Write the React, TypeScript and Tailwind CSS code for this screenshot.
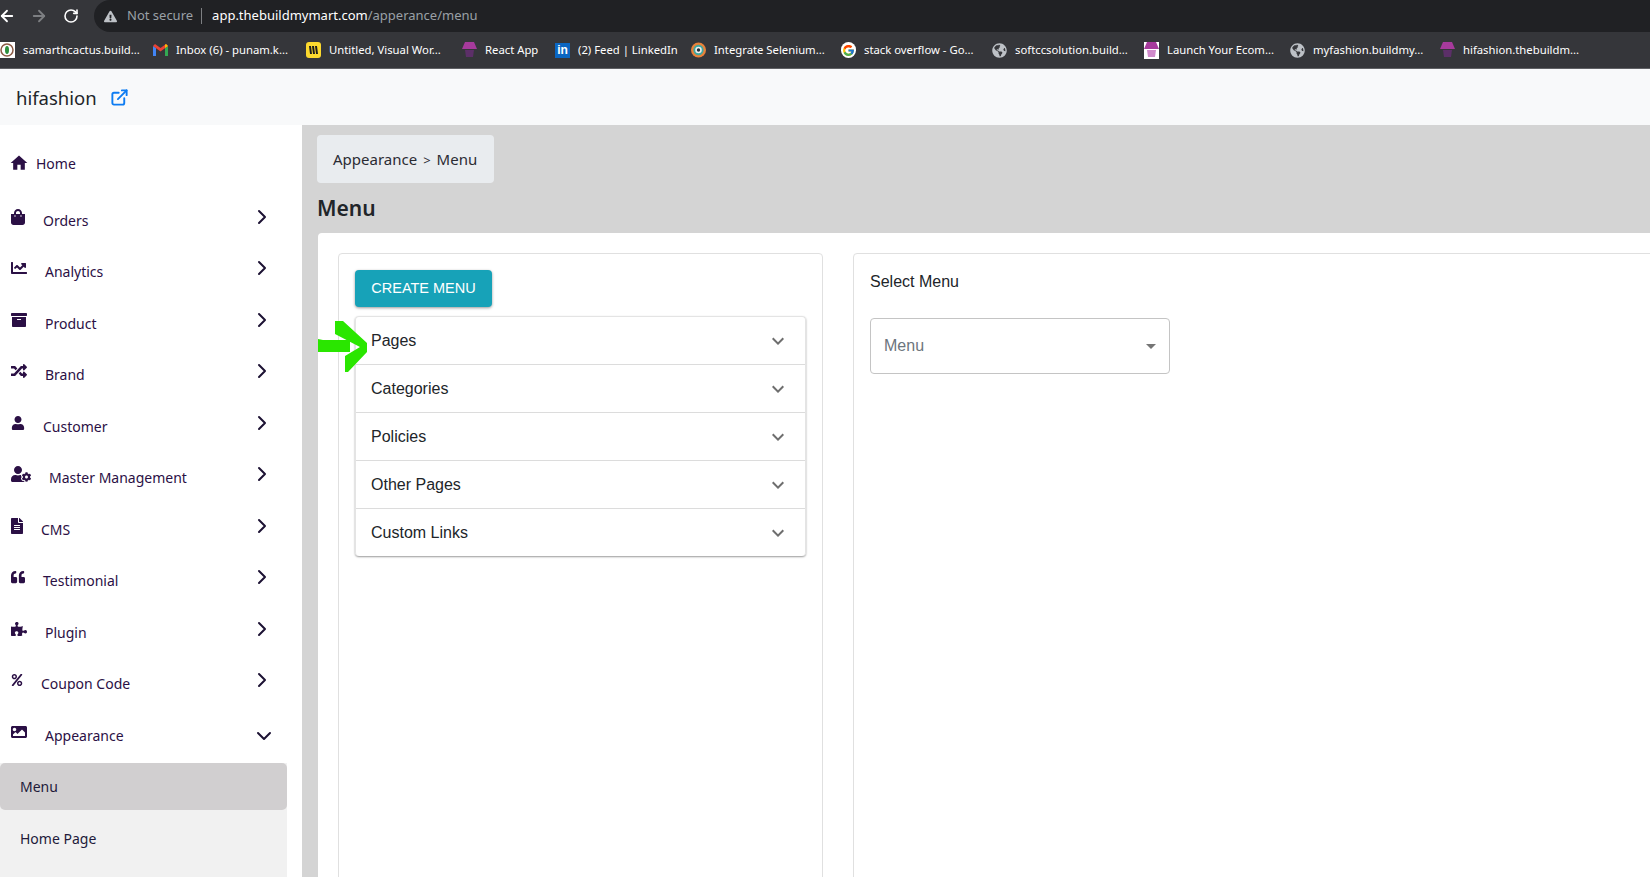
import React from 'react';
import { ArrowLeft, ArrowRight, ChevronDown, ChevronRight, ExternalLink, RotateCw } from 'lucide-react';
import {
  FaArchive,
  FaChartLine,
  FaExclamationTriangle,
  FaFileAlt,
  FaGlobeAmericas,
  FaImage,
  FaPercent,
  FaPuzzlePiece,
  FaQuoteLeft,
  FaRandom,
  FaShoppingBag,
  FaUser,
  FaUserCog,
} from 'react-icons/fa';
import { FcGoogle } from 'react-icons/fc';
import { MdExpandMore, MdHome } from 'react-icons/md';

const ShopIcon = ({ boxed }: { boxed?: boolean }) => (
  <svg width="15" height="17" viewBox="0 0 15 17" className={boxed ? 'bg-white' : ''}>
    <path d="M3 0h9l3 7H0z" fill="#a63a9c" />
    <path d="M3 8h9l-1 7H4z" fill={boxed ? '#d08acb' : '#5c2f68'} />
  </svg>
);

const GmailIcon = () => (
  <svg width="15" height="12" viewBox="0 0 15 12">
    <path d="M0 2v10h3V4z" fill="#4285f4" />
    <path d="M15 2v10h-3V4z" fill="#34a853" />
    <path d="M0 2l7.5 5.5L15 2 13 0 7.5 4 2 0z" fill="#ea4335" />
    <path d="M12 4l3-2-2-2-1 .8z" fill="#fbbc04" />
  </svg>
);

const CactusIcon = () => (
  <svg width="15" height="16" viewBox="0 0 15 16">
    <rect width="15" height="16" fill="#fff" />
    <circle cx="7" cy="8" r="6" fill="none" stroke="#8a5a44" strokeWidth="1.5" />
    <ellipse cx="7" cy="8" rx="2" ry="4" fill="#2f8f3e" />
  </svg>
);

const MiroIcon = () => (
  <svg width="15" height="16" viewBox="0 0 15 16">
    <rect width="15" height="16" rx="3" fill="#fcd92e" />
    <path d="M4 4l1 8M7 4l1 8M10 4l1 8" stroke="#1c1c1c" strokeWidth="2" />
  </svg>
);

const TargetIcon = () => (
  <svg width="16" height="16" viewBox="0 0 16 16">
    <circle cx="8" cy="8" r="8" fill="#e8823a" />
    <circle cx="8" cy="8" r="5.5" fill="#3fa7a0" />
    <circle cx="8" cy="8" r="3.5" fill="#f0f0f0" />
    <circle cx="8" cy="8" r="1.8" fill="#23303a" />
  </svg>
);

const bookmarks = [
  { label: 'samarthcactus.build...', width: 'w-[153px]', icon: <CactusIcon /> },
  { label: 'Inbox (6) - punam.k...', width: 'w-[153px]', icon: <GmailIcon /> },
  { label: 'Untitled, Visual Wor...', width: 'w-[156px]', icon: <MiroIcon /> },
  { label: 'React App', width: 'w-[93px]', icon: <ShopIcon /> },
  {
    label: '(2) Feed | LinkedIn',
    width: 'w-[136px]',
    icon: (
      <span className="flex h-[15px] w-[15px] items-center justify-center bg-[#0a66c2] font-['Liberation_Sans',sans-serif] text-[12px] font-bold leading-none text-white">
        in
      </span>
    ),
  },
  { label: 'Integrate Selenium...', width: 'w-[150px]', icon: <TargetIcon /> },
  {
    label: 'stack overflow - Go...',
    width: 'w-[151px]',
    icon: (
      <span className="flex h-4 w-4 items-center justify-center rounded-full bg-white">
        <FcGoogle size={13} />
      </span>
    ),
  },
  { label: 'softccsolution.build...', width: 'w-[152px]', icon: <FaGlobeAmericas size={15} className="text-[#bdc1c6]" /> },
  { label: 'Launch Your Ecom...', width: 'w-[146px]', icon: <ShopIcon boxed /> },
  { label: 'myfashion.buildmy...', width: 'w-[150px]', icon: <FaGlobeAmericas size={15} className="text-[#bdc1c6]" /> },
  { label: 'hifashion.thebuildm...', width: 'w-[150px]', icon: <ShopIcon /> },
];

const navItems = [
  { label: 'Orders', icon: <FaShoppingBag size={16} className="w-[14px]" /> },
  { label: 'Analytics', icon: <FaChartLine size={16} /> },
  { label: 'Product', icon: <FaArchive size={16} /> },
  { label: 'Brand', icon: <FaRandom size={16} /> },
  { label: 'Customer', icon: <FaUser size={14} /> },
  { label: 'Master Management', icon: <FaUserCog size={20} /> },
  { label: 'CMS', icon: <FaFileAlt size={16} className="w-3" /> },
  { label: 'Testimonial', icon: <FaQuoteLeft size={14} /> },
  { label: 'Plugin', icon: <FaPuzzlePiece size={16} /> },
  { label: 'Coupon Code', icon: <FaPercent size={12} /> },
];

const accordionItems = ['Pages', 'Categories', 'Policies', 'Other Pages', 'Custom Links'];

const App: React.FC = () => {
  return (
    <div className="flex h-[877px] w-[1650px] flex-col overflow-hidden bg-white font-['Noto_Sans',sans-serif]">
      {/* Browser toolbar */}
      <div className="flex h-8 shrink-0 items-center bg-[#35363a]">
        <div className="flex w-[94px] shrink-0 items-center text-white">
          <ArrowLeft size={18} strokeWidth={2.4} className="-ml-[2px]" />
          <ArrowRight size={18} strokeWidth={2.4} className="ml-[14px] text-[#7d7f82]" />
          <RotateCw size={16} strokeWidth={2.4} className="ml-[15px]" />
        </div>
        <div className="flex h-8 flex-1 items-center rounded-l-[16px] bg-[#202124] pl-[10px] text-[13px]">
          <FaExclamationTriangle size={13} className="text-[#bdc1c6]" />
          <span className="ml-[10px] text-[#9aa0a6]">Not secure</span>
          <span className="ml-[8px] h-4 w-px bg-[#7d7f82]" />
          <span className="ml-[10px] text-white">app.thebuildmymart.com</span>
          <span className="text-[#9aa0a6]">/apperance/menu</span>
        </div>
      </div>

      {/* Bookmarks */}
      <div className="flex h-[37px] shrink-0 items-center border-b border-[#5f6064] bg-[#35363a]">
        {bookmarks.map((b) => (
          <div key={b.label} className={`flex shrink-0 items-center gap-2 ${b.width}`}>
            <span className="flex w-[15px] shrink-0 justify-center">{b.icon}</span>
            <span className="whitespace-nowrap text-[11.3px] text-white">{b.label}</span>
          </div>
        ))}
      </div>

      {/* App header */}
      <header className="flex h-[56px] shrink-0 items-center bg-[#f8f9fa] pl-4">
        <span className="pt-[2px] text-[18.5px] text-[#212529]">hifashion</span>
        <ExternalLink size={19} strokeWidth={2.4} className="ml-[13px] text-[#0d7cf2]" />
      </header>

      <div className="flex min-h-0 flex-1">
        {/* Sidebar */}
        <aside className="flex w-[302px] shrink-0 flex-col bg-white text-[14px] text-[#2b1045]">
          <div className="mb-[2px] mt-[12px] flex h-[52px] items-center gap-[7px] pl-[9px]">
            <MdHome size={20} />
            <span>Home</span>
          </div>
          {navItems.map((item) => (
            <div key={item.label} className="flex h-[51.5px] items-center pl-[11px] pr-[28px]">
              {item.icon}
              <span className="ml-[18px] flex-1 pt-[7px]">{item.label}</span>
              <ChevronRight size={24} strokeWidth={2} className="text-[#1c1233]" />
            </div>
          ))}
          <div className="flex h-[51.5px] items-center pl-[11px] pr-[28px]">
            <FaImage size={16} />
            <span className="ml-[18px] flex-1 pt-[7px]">Appearance</span>
            <ChevronDown size={24} strokeWidth={2} className="-mr-[2px] mt-2 text-[#1c1233]" />
          </div>
          <div className="mt-[5px] flex w-[287px] flex-1 flex-col bg-[#f1f1f1] text-[#221a3a]">
            <div className="flex h-[47px] shrink-0 items-center rounded-[5px] bg-[#d1cfd0] pl-5">Menu</div>
            <div className="flex h-[57px] shrink-0 items-center pl-5">Home Page</div>
          </div>
        </aside>

        {/* Main content */}
        <main className="relative min-w-0 flex-1 overflow-hidden bg-[#d4d4d4] pl-[15px]">
          <div className="mt-[10px] flex h-[48px] w-[177px] items-center rounded-[4px] bg-[#e9ecef] pl-[16px] text-[15px] text-[#2b2b33]">
            Appearance
            <span className="mx-[6px] translate-y-[2px] text-[13px]">&gt;</span>
            Menu
          </div>
          <h1 className="mt-[9px] h-[41px] text-[21px] font-semibold leading-[32px] text-[#212529]">Menu</h1>
          <div className="ml-px flex h-[700px] w-[1400px] gap-[30px] rounded-[4px] bg-white p-5 font-['Liberation_Sans',sans-serif]">
            <section className="h-[680px] w-[485px] shrink-0 rounded-[4px] border border-[#e0e0e0] p-4">
              <button className="flex h-[37px] w-[137px] items-center justify-center rounded-[4px] bg-[#17a2b8] text-[14.5px] uppercase text-white shadow-[0_1px_3px_rgba(0,0,0,0.4)]">
                Create Menu
              </button>
              <div className="mt-[9px] rounded-[4px] border-x border-t border-[#e4e4e4] shadow-[0_1px_2px_rgba(0,0,0,0.4)]">
                {accordionItems.map((name, i) => (
                  <div
                    key={name}
                    className={`flex items-center justify-between pl-[15px] pr-[15px] text-[16px] text-[#212529] ${
                      i > 0 ? 'h-[48px] border-t border-[#dcdcdc]' : 'h-[47px]'
                    }`}
                  >
                    <span>{name}</span>
                    <MdExpandMore size={24} className="text-[#6e6e6e]" />
                  </div>
                ))}
              </div>
            </section>
            <section className="h-[680px] w-[900px] shrink-0 rounded-[4px] border border-[#e0e0e0] px-4 pt-4">
              <p className="text-[16px] leading-[24px] text-[#212529]">Select Menu</p>
              <div className="mt-[24px] flex h-[56px] w-[300px] items-center justify-between rounded-[4px] border border-[#c4c4c4] pl-[13px] pr-[13px] text-[16px] text-[#6c757d]">
                <span>Menu</span>
                <span className="h-0 w-0 border-x-[5px] border-t-[5px] border-x-transparent border-t-[#757575]" />
              </div>
            </section>
          </div>

          {/* Hand-drawn annotation arrow */}
          <svg width="50" height="54" viewBox="0 0 50 54" className="absolute left-[16px] top-[195px]">
            <path d="M0 19l5 1h27v12H0z" fill="#2ae600" />
            <path d="M17 1h8l24 22v9L30 52h-3V36l15-9-25-13z" fill="#2ae600" />
          </svg>
        </main>
      </div>
    </div>
  );
};

export default App;
